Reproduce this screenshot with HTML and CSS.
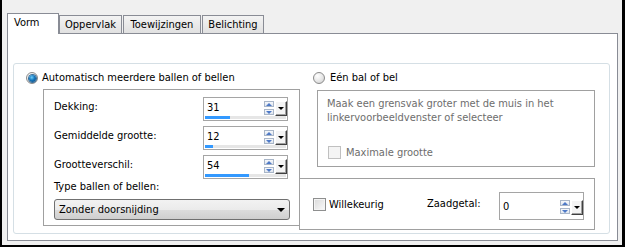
FILE: index.html
```html
<!DOCTYPE html>
<html>
<head>
<meta charset="utf-8">
<link rel="stylesheet" href="styles.css">
</head>
<body>
<div class="window">
  <div class="tabs">
    <div class="tab active w-vorm">Vorm</div>
    <div class="tab w-opp">Oppervlak</div>
    <div class="tab w-toe">Toewijzingen</div>
    <div class="tab w-bel">Belichting</div>
  </div>
  <div class="panel">
    <div class="group">
      <div class="col-left">
        <div class="radio-row"><span class="radio on"></span><span>Automatisch meerdere ballen of bellen</span></div>
        <div class="box-left">
          <div class="field">
            <span class="lbl">Dekking:</span>
            <div class="spin">
              <div class="spin-top"><span class="spin-val">31</span><span class="sbs"><span class="sb up"></span><span class="sb down"></span></span><span class="dd"></span></div>
              <div class="track"><div class="fill" style="width:25px"></div></div>
            </div>
          </div>
          <div class="field">
            <span class="lbl">Gemiddelde grootte:</span>
            <div class="spin">
              <div class="spin-top"><span class="spin-val">12</span><span class="sbs"><span class="sb up"></span><span class="sb down"></span></span><span class="dd"></span></div>
              <div class="track"><div class="fill" style="width:8px"></div></div>
            </div>
          </div>
          <div class="field">
            <span class="lbl">Grootteverschil:</span>
            <div class="spin">
              <div class="spin-top"><span class="spin-val">54</span><span class="sbs"><span class="sb up"></span><span class="sb down"></span></span><span class="dd"></span></div>
              <div class="track"><div class="fill" style="width:44px"></div></div>
            </div>
          </div>
          <div class="type-lbl">Type ballen of bellen:</div>
          <div class="combo"><span>Zonder doorsnijding</span><span class="caret"></span></div>
        </div>
      </div>
      <div class="col-right">
        <div class="radio-row indent"><span class="radio"></span><span>Eén bal of bel</span></div>
        <div class="box-right">
          <div class="hint">Maak een grensvak groter met de muis in het<br>linkervoorbeeldvenster of selecteer</div>
          <div class="check disabled"><span class="cb"></span><span>Maximale grootte</span></div>
        </div>
        <div class="box-bottom">
          <div class="check rnd"><span class="cb"></span><span>Willekeurig</span></div>
          <span class="seed-lbl">Zaadgetal:</span>
          <div class="spin tall">
            <div class="spin-top"><span class="spin-val">0</span><span class="sbs"><span class="sb up"></span><span class="sb down"></span></span><span class="dd"></span></div>
          </div>
        </div>
      </div>
    </div>
  </div>
</div>
</body>
</html>
```
FILE: styles.css
```css
* { box-sizing: border-box; }
html, body { margin: 0; padding: 0; }
body {
  font-family: "DejaVu Sans Condensed", "DejaVu Sans", sans-serif;
  font-size: 11px;
  color: #000;
  background: #f0f0f0;
}
.window {
  width: 625px;
  height: 247px;
  background: #f0f0f0;
  border-left: 2px solid #000;
  border-right: 3px solid #000;
  border-bottom: 2px solid #000;
  padding: 13px 0 0 5px;
}
.tabs {
  display: flex;
  align-items: flex-end;
  height: 20px;
  position: relative;
  z-index: 1;
}
.tab {
  height: 18px;
  border: 1px solid #898c95;
  border-bottom: none;
  background: linear-gradient(#f3f3f3, #e1e1e1);
  line-height: 13px;
  padding-top: 2px;
  text-align: center;
  margin-right: 1px;
}
.tab.active {
  height: 21px;
  margin-bottom: -1px;
  background: #fff;
  text-align: left;
  padding: 2px 0 0 6px;
  margin-right: 0;
}
.w-vorm { width: 52px; }
.w-opp { width: 63px; }
.w-toe { width: 78px; }
.w-bel { width: 62px; }

.panel {
  width: 611px;
  height: 208px;
  border: 1px solid #898c95;
  background: #fff;
  padding: 29px 0 0 5px;
}
.group {
  width: 597px;
  height: 171px;
  border: 1px solid #d5dfe5;
  border-radius: 3px;
  display: flex;
  padding: 8px 0 0 12px;
}
.col-left { width: 274px; flex: none; }
.col-right { flex: 1; }

.radio-row {
  display: flex;
  align-items: center;
  height: 12px;
  line-height: 12px;
  gap: 4px;
  white-space: nowrap;
}
.radio-row.indent { margin-left: 13px; gap: 5px; }
.radio {
  width: 12px;
  height: 12px;
  flex: none;
  border-radius: 50%;
  border: 1px solid #8b8b8b;
  background: radial-gradient(circle at 35% 30%, #ffffff 0%, #e6e6e6 55%, #c9c9c9 100%);
  display: flex;
  align-items: center;
  justify-content: center;
}
.radio.on::after {
  content: "";
  width: 7px;
  height: 7px;
  border-radius: 50%;
  background: radial-gradient(circle at 40% 35%, #6fcdf8 0%, #1477bd 45%, #083f72 100%);
  box-shadow: 0 0 0 1px #3a6f9a;
}

.box-left {
  margin: 5px 0 0 17px;
  width: 257px;
  height: 137px;
  border: 1px solid #a0a0a0;
  padding: 7px 0 0 10px;
}
.field {
  display: flex;
  height: 24px;
  margin-bottom: 5px;
}
.field:nth-child(3) { margin-bottom: 0; }
.lbl {
  width: 149px;
  flex: none;
  line-height: 13px;
  margin-top: 3px;
}
.spin {
  width: 85px;
  height: 24px;
  border: 1px solid #a5a5a5;
  background: #fff;
  padding: 3px 0 0 1px;
  display: flex;
  flex-direction: column;
}
.spin.tall { height: 28px; padding-top: 7px; }
.spin-top {
  display: flex;
  height: 14px;
}
.spin-val {
  flex: 1;
  padding-left: 2px;
  line-height: 14px;
}
.sbs {
  width: 10px;
  display: flex;
  flex-direction: column;
  justify-content: space-between;
  height: 14px;
  margin-right: 1px;
}
.sb {
  height: 6px;
  border: 1px solid #a9b6c8;
  background: linear-gradient(#f6f8fb, #dfe6ef);
  display: flex;
  align-items: center;
  justify-content: center;
}
.sb.up::after {
  content: "";
  border-left: 3px solid transparent;
  border-right: 3px solid transparent;
  border-bottom: 3px solid #4d79c7;
}
.sb.down::after {
  content: "";
  border-left: 3px solid transparent;
  border-right: 3px solid transparent;
  border-top: 3px solid #4d79c7;
}
.dd {
  width: 12px;
  height: 15px;
  flex: none;
  background: #f4f4f4;
  border-top: 1px solid #fff;
  border-left: 1px solid #fff;
  border-right: 1px solid #404040;
  border-bottom: 1px solid #404040;
  box-shadow: inset -1px -1px 0 #a0a0a0;
  display: flex;
  align-items: center;
  justify-content: center;
}
.dd::after {
  content: "";
  border-left: 3px solid transparent;
  border-right: 3px solid transparent;
  border-top: 3px solid #000;
  margin-right: 1px;
}
.track {
  margin-top: 1px;
  width: 81px;
  height: 3px;
  background: #e6e6e6;
}
.fill {
  height: 3px;
  background: #3399ff;
}
.type-lbl {
  line-height: 13px;
  margin-top: 1px;
}
.combo {
  margin-top: 6px;
  width: 236px;
  height: 21px;
  border: 1px solid #707070;
  border-radius: 3px;
  background: linear-gradient(#f2f2f2 0%, #ebebeb 50%, #dddddd 51%, #cfcfcf 100%);
  display: flex;
  align-items: center;
  justify-content: space-between;
  padding: 0 4px 0 4px;
  line-height: 13px;
}
.caret {
  border-left: 4px solid transparent;
  border-right: 4px solid transparent;
  border-top: 4px solid #000;
  margin-top: 1px;
}

.box-right {
  margin: 6px 0 0 17px;
  width: 278px;
  height: 77px;
  border: 1px solid #a0a0a0;
  padding: 6px 0 0 9px;
  color: #6d6d6d;
}
.hint { line-height: 14px; white-space: nowrap; }
.check {
  display: flex;
  align-items: center;
  gap: 5px;
  height: 13px;
  line-height: 13px;
  white-space: nowrap;
}
.check.disabled { margin-top: 21px; margin-left: 1px; }
.cb {
  width: 13px;
  height: 13px;
  flex: none;
  border: 1px solid #8e8f8f;
  background: linear-gradient(135deg, #d9d9d9, #fafafa);
  box-shadow: inset 0 0 0 1px #f4f4f4;
}
.disabled .cb {
  border-color: #c0c0c0;
  background: #f4f4f4;
  box-shadow: none;
}

.box-bottom {
  margin: 11px 0 0 -1px;
  width: 296px;
  height: 52px;
  border: 1px solid #a0a0a0;
  padding: 13px 0 0 13px;
  display: flex;
  align-items: flex-start;
}
.check.rnd { width: 114px; margin-top: 6px; gap: 3px; }
.seed-lbl {
  width: 72px;
  line-height: 13px;
  margin-top: 5px;
}
```
